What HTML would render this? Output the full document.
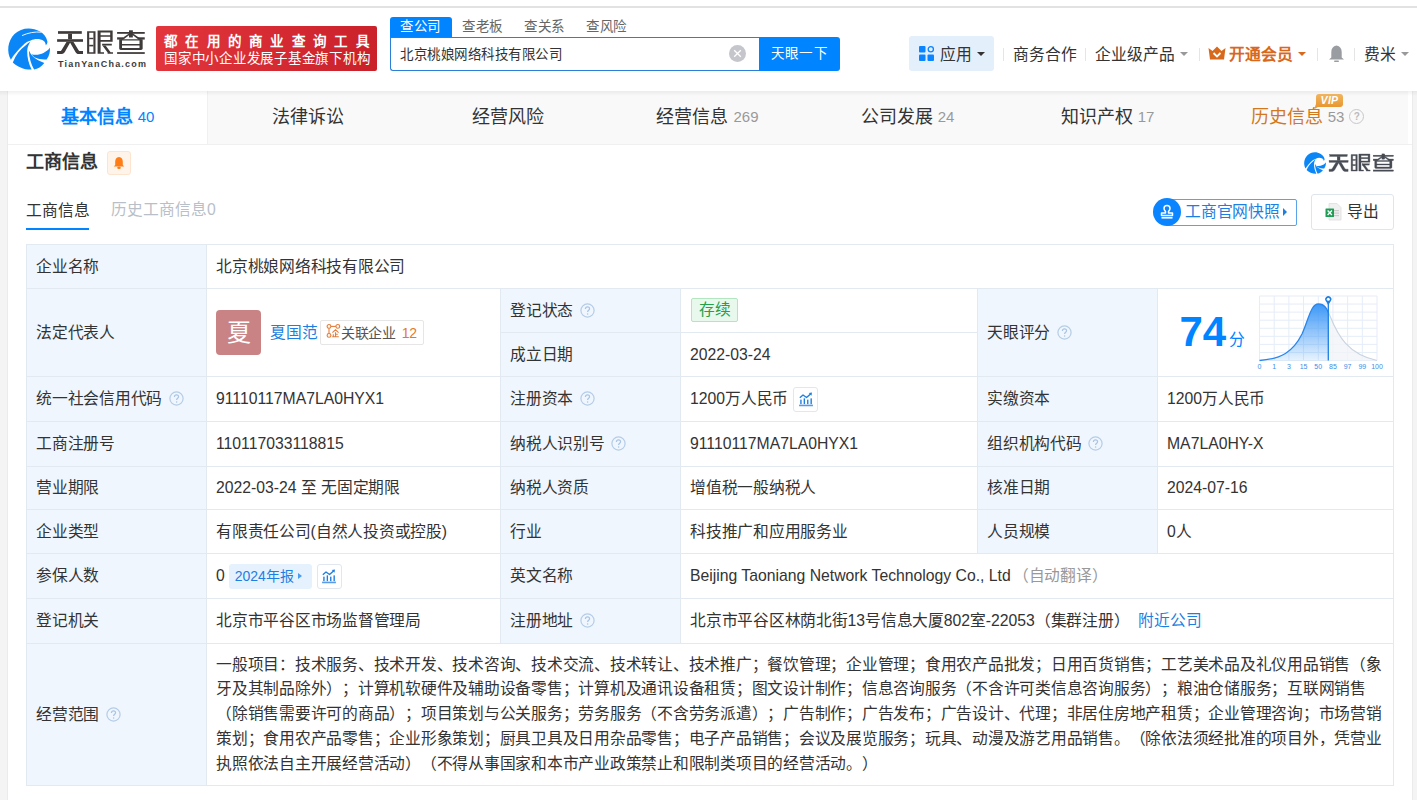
<!DOCTYPE html>
<html lang="zh-CN"><head><meta charset="utf-8">
<style>
*{box-sizing:border-box;margin:0;padding:0}
html,body{width:1417px;height:800px;overflow:hidden}
body{position:relative;text-spacing-trim:space-all;background:#f4f4f4;font-family:"Liberation Sans",sans-serif;color:#333;}
.abs{position:absolute;white-space:nowrap}
#topline{position:absolute;left:0;top:0;width:1417px;height:6px;background:#fff}
#topline2{position:absolute;left:0;top:6px;width:1417px;height:2px;background:#e2e2e2}
#header{position:absolute;left:0;top:8px;width:1417px;height:83px;background:#fff}
#card{position:absolute;left:7px;top:91px;width:1406px;height:709px;background:#fff;border-left:1px solid #ebebeb;border-right:1px solid #ebebeb}
#tabs{position:absolute;left:8px;top:91px;width:1400px;height:54px;background:#f9f9f9;border-bottom:1px solid #f0f0f0}
#tabline{position:absolute;left:1408px;top:144px;width:4px;height:1px;background:#f0f0f0}
#tabsep{position:absolute;left:207px;top:91px;width:1px;height:53px;background:#f0f0f0}
#hshadow{position:absolute;left:0;top:91px;width:1417px;height:5px;background:linear-gradient(rgba(0,0,0,0.055),rgba(0,0,0,0))}
.tab{position:absolute;top:0;height:53px;width:199px;text-align:center;font-size:18px;line-height:52px;color:#333}
.tab .tq{display:inline-block;vertical-align:middle;margin-top:-3px;width:15px;height:15px;border:1px solid #c8c8c8;border-radius:50%;font-size:10px;line-height:13px;text-align:center;color:#bbb;font-weight:bold;margin-left:5px}
.tab .n{font-size:15px;color:#999;margin-left:5px;position:relative;top:-1.5px}
#rstrip{position:absolute;left:1409px;top:91px;width:2px;height:709px;background:#fff}
#rline{position:absolute;left:1411px;top:91px;width:2px;height:709px;background:#ebebeb}
/* table */
.tb{position:absolute;background:#e3e9f0}
.lab{position:absolute;background:#eff6fd;font-size:15.75px;color:#333;padding-left:9px;display:flex;align-items:center;white-space:nowrap}
.val{position:absolute;background:#fff;font-size:15.75px;color:#333;padding-left:9px;display:flex;align-items:center;white-space:nowrap}
.q{display:inline-block;width:15px;height:15px;margin-left:6.5px;position:relative;top:-1.2px}
.tag-green{display:inline-block;width:47px;height:24px;line-height:22px;padding:0 0 0 7px;border:1px solid #b3e5c0;background:#e9f8ed;color:#23a04a;font-size:15.75px;border-radius:2px;margin-left:1px;margin-top:-1px}
.avatar{display:inline-block;width:45px;height:45px;border-radius:4px;background:#c98384;color:#fff;font-size:24px;line-height:45px;text-align:center}
.pname{color:#1c7fe1;margin-left:9px;position:relative;top:-3.5px}
.rel{display:inline-flex;align-items:center;height:25px;border:1px solid #e6e6e6;border-radius:2px;padding:0 6px 0 5px;font-size:14px;letter-spacing:-0.3px;color:#555;margin-left:2px;position:relative;top:-4px}
.rel b{font-weight:normal;color:#e7792b;margin-left:6px;font-size:14px}
.chart-ic{display:inline-flex;align-items:center;justify-content:center;width:25px;height:25px;border:1px solid #e1e7ee;border-radius:3px;margin-left:5px}
.yr{display:inline-flex;align-items:center;width:83px;height:25px;background:#e5f1fd;color:#1c7fe1;padding:0 0 0 6px;border-radius:3px;margin-left:4px;font-size:14px}
.tri{display:inline-block;width:0;height:0;border-left:4.5px solid #4a9cf0;border-top:3.5px solid transparent;border-bottom:3.5px solid transparent;margin-left:5px}
.auto{color:#999;margin-left:2px}
.c{letter-spacing:-0.25px}
.in{white-space:nowrap;line-height:20px}
.q,.chart-ic,.yr,.tag-green,.rel{vertical-align:middle}
.near{color:#1c7fe1;margin-left:9px}
.scope{font-size:15.75px;letter-spacing:-0.25px;line-height:24.75px;white-space:nowrap}
.score{position:absolute;left:21.5px;top:21.5px;font-size:42px;line-height:42px;font-weight:bold;color:#0084ff}
.fen{position:absolute;left:71px;top:41.5px;font-size:15.75px;line-height:18px;color:#0084ff}
</style></head><body>
<div id="topline"></div><div id="topline2"></div>
<div id="header"></div>
<svg class="abs" style="left:0;top:0" width="60" height="80" viewBox="0 0 60 80">
 <g fill="#0a86f7">
  <path d="M10.9,59.8 C6.5,52 7.5,41 14.5,34 C21,28 31,26.5 40.1,31.6 C43.5,33.5 46.5,37 47.4,41.5 C47.6,43 46.8,44.5 45.8,45.2 C45.6,43.5 45,41.8 43.8,41 C40,38.5 34.5,38.5 30.8,40.6 C27.5,41.5 25,43 23.5,44.8 C18,50 13.5,55 10.9,59.8 Z"/>
  <path d="M12.8,62.4 C16,55 20,49.5 25.5,45.6 C27,44 28.8,42.5 30.4,41.8 C28.4,44.5 27.3,47.8 27.2,51 C27,57 28.8,64 31.6,69.6 C24,69.8 17,66.5 12.8,62.4 Z"/>
  <path d="M28.9,50.4 C30.5,54 32.5,56.5 35,58.2 C38,60.3 41.5,61.8 44.3,62.9 C41.5,66.5 37.8,68.8 34.1,69.5 C31,64 29,57 28.9,50.4 Z"/>
  <path d="M31.6,54.2 C35,55.3 40,54.8 43.5,53 C46.8,51.3 49,49.5 49.9,47.6 C50.3,52 49.3,56 46.6,59.4 C42.5,59.7 38.5,59.2 35.6,57.8 C33.8,57 32.5,55.8 31.6,54.2 Z"/>
 </g>
 <path d="M22,35.6 C28,32.8 35,31.5 41.5,32.2" stroke="#fff" stroke-width="0.9" fill="none"/>
</svg>
<svg class="abs" style="left:0;top:0" width="150" height="60" viewBox="0 0 150 60"><g fill="#3e3a39" fill-rule="evenodd">
<rect x="58" y="31.15" width="23.8" height="2.65"/><rect x="68.1" y="33.8" width="3.9" height="5.4"/><rect x="57.1" y="39.2" width="25.9" height="2.6"/>
<path d="M66.6,41.8 L70.6,41.8 L65.8,50.3 C64.8,52.3 63.6,54.1 61.5,54.1 L57.1,54.1 L57.1,51.1 L59.8,51.1 C60.6,51.1 61.1,50.7 61.6,49.9 Z"/>
<path d="M69.6,41.8 L73.4,41.8 L78.6,50.2 C79,50.8 79.5,51.1 80.2,51.1 L83,51.1 L83,54.1 L78.6,54.1 C77.2,54.1 76.3,53.3 75.6,52.2 Z"/>
<path d="M87.1,31.3 H95.5 V53.7 H87.1 Z M89.2,32.7 V52.15 H93.4 V32.7 Z"/><rect x="89.2" y="37.8" width="4.2" height="1.4"/><rect x="89.2" y="44.8" width="4.2" height="1.6"/>
<path d="M97.6,30.45 H112.65 V41.65 H100.6 V52.15 H104 V53.7 H97.6 Z M100.6,32.55 V35.35 H110.2 V32.55 Z M100.6,36.75 V39.9 H110.2 V36.75 Z"/>
<rect x="102.15" y="43.75" width="9.65" height="1.75"/>
<path d="M102.4,45.4 L105.6,45.4 L110.6,52.15 L113,52.15 L113,53.7 L107.6,53.7 L107.6,52.4 Z"/>
<rect x="117.1" y="32" width="27.65" height="1.8"/><rect x="129" y="30.3" width="3.85" height="7.15"/>
<rect x="117.1" y="37.3" width="6" height="2.25"/><rect x="138.1" y="37.3" width="6.65" height="2.25"/>
<path d="M128.6,33.8 L131,33.8 L123.4,39.4 L120.2,39.4 Z"/><path d="M130.9,33.8 L133.3,33.8 L141.7,39.4 L138.4,39.4 Z"/>
<path d="M119.2,39.2 H142.65 V48.6 C142.65,49.5 142,50.05 141,50.05 H120.8 C119.8,50.05 119.2,49.5 119.2,48.6 Z M122,40.6 V43.9 H139.5 V40.6 Z M122,45.5 V48.1 H139.5 V45.5 Z"/>
<rect x="117.1" y="52.15" width="27.65" height="1.75"/>
</g></svg>
<div class="abs" style="left:58px;top:58px;font-size:9px;line-height:12px;font-weight:bold;color:#3e3a39;letter-spacing:1.2px">TianYanCha.com</div>
<div class="abs" style="left:156px;top:26px;width:221px;height:45px;border-radius:2px;background:linear-gradient(100deg,#e3363c,#c9202a)"></div>
<div class="abs" style="left:164px;top:33px;font-size:13.5px;line-height:18px;color:#fff;font-weight:bold;letter-spacing:8.3px">都在用的商业查询工具</div>
<div class="abs" style="left:164px;top:50px;font-size:13.5px;line-height:18px;color:#fff;font-weight:500;letter-spacing:0.75px">国家中小企业发展子基金旗下机构</div>
<!-- search -->
<div class="abs" style="left:390px;top:17px;width:62px;height:21px;background:#0084ff;border-radius:3px 3px 0 0"></div>
<div class="abs" style="left:400px;top:17px;font-size:13.5px;line-height:20px;color:#fff;letter-spacing:0.5px">查公司</div>
<div class="abs" style="left:462px;top:17px;font-size:13.5px;line-height:20px;color:#666;letter-spacing:0.5px">查老板</div>
<div class="abs" style="left:524px;top:17px;font-size:13.5px;line-height:20px;color:#666;letter-spacing:0.5px">查关系</div>
<div class="abs" style="left:586px;top:17px;font-size:13.5px;line-height:20px;color:#666;letter-spacing:0.5px">查风险</div>
<div class="abs" style="left:390px;top:37px;width:371px;height:34px;border:1px solid #2a7fd8;border-right:none;border-radius:0 0 0 3px;background:#fff"></div>
<div class="abs" style="left:400px;top:45px;font-size:13.5px;line-height:20px;color:#333;letter-spacing:0.5px">北京桃娘网络科技有限公司</div>
<div class="abs" style="left:729px;top:45px;width:17px;height:17px;border-radius:50%;background:#c5c6cb"></div>
<svg class="abs" style="left:729px;top:45px" width="17" height="17"><path d="M5.2,5.2 L11.8,11.8 M11.8,5.2 L5.2,11.8" stroke="#fff" stroke-width="1.3"/></svg>
<div class="abs" style="left:759px;top:37px;width:81px;height:34px;background:#0084ff;border-radius:0 3px 3px 0"></div>
<div class="abs" style="left:771px;top:44px;font-size:13.5px;line-height:20px;color:#fff;letter-spacing:1.2px">天眼一下</div>
<!-- nav -->
<div class="abs" style="left:909px;top:36px;width:85px;height:35px;border-radius:3px;background:#e4effc"></div>
<svg class="abs" style="left:919px;top:46px" width="16" height="16" viewBox="0 0 16 16"><rect x="0" y="0" width="6.5" height="6.5" rx="1" fill="#0a84ff"/><circle cx="11.8" cy="3.25" r="2.6" fill="none" stroke="#0a84ff" stroke-width="1.3"/><rect x="0" y="8.5" width="6.5" height="6.5" rx="1" fill="#0a84ff"/><rect x="8.5" y="8.5" width="6.5" height="6.5" rx="1" fill="#0a84ff"/></svg>
<div class="abs" style="left:940px;top:44.5px;font-size:15.75px;line-height:20px;color:#333">应用</div>
<div class="abs" style="left:977px;top:52px;width:0;height:0;border-left:4px solid transparent;border-right:4px solid transparent;border-top:4px solid #333"></div>
<div class="abs" style="left:1003px;top:48px;width:1px;height:13px;background:#e5e5e5"></div>
<div class="abs" style="left:1013px;top:44.5px;font-size:15.75px;line-height:20px;color:#333">商务合作</div>
<div class="abs" style="left:1085px;top:48px;width:1px;height:13px;background:#e5e5e5"></div>
<div class="abs" style="left:1095px;top:44.5px;font-size:15.75px;line-height:20px;color:#333">企业级产品</div>
<div class="abs" style="left:1180px;top:52px;width:0;height:0;border-left:4px solid transparent;border-right:4px solid transparent;border-top:4px solid #999"></div>
<div class="abs" style="left:1199px;top:48px;width:1px;height:13px;background:#e5e5e5"></div>
<svg class="abs" style="left:1208px;top:46px" width="18" height="15" viewBox="0 0 18 15"><path d="M0.5,2 L4.5,5 L9,0.5 L13.5,5 L17.5,2 L16,13.5 L2,13.5 Z" fill="#d8691c"/><path d="M5.5,7 L9,10.5 L12.5,7" stroke="#fff" stroke-width="1.8" fill="none"/></svg>
<div class="abs" style="left:1229px;top:44.5px;font-size:15.75px;line-height:20px;color:#d8691c;font-weight:bold">开通会员</div>
<div class="abs" style="left:1298px;top:52px;width:0;height:0;border-left:4px solid transparent;border-right:4px solid transparent;border-top:4px solid #d8691c"></div>
<div class="abs" style="left:1317px;top:48px;width:1px;height:13px;background:#e5e5e5"></div>
<svg class="abs" style="left:1328px;top:45px" width="17" height="18" viewBox="0 0 17 18"><path d="M8.5,0.5 C5,1 3.3,3.5 3.3,7 L3.3,12.5 L1,14.5 L16,14.5 L13.7,12.5 L13.7,7 C13.7,3.5 12,1 8.5,0.5 Z" fill="#999ca1"/><rect x="6" y="15.5" width="5" height="1.6" rx="0.8" fill="#999ca1"/></svg>
<div class="abs" style="left:1354px;top:48px;width:1px;height:13px;background:#e5e5e5"></div>
<div class="abs" style="left:1364px;top:44.5px;font-size:15.75px;line-height:20px;color:#333">费米</div>
<div class="abs" style="left:1401px;top:52px;width:0;height:0;border-left:4px solid transparent;border-right:4px solid transparent;border-top:4px solid #999"></div>

<div id="card"></div>
<div id="tabs">
  <div class="tab" style="left:0;background:#fff;color:#0084ff;font-weight:bold">基本信息<span class="n" style="color:#0084ff;font-weight:normal">40</span></div>
  <div class="tab" style="left:200px">法律诉讼</div>
  <div class="tab" style="left:400px">经营风险</div>
  <div class="tab" style="left:600px">经营信息<span class="n">269</span></div>
  <div class="tab" style="left:800px">公司发展<span class="n">24</span></div>
  <div class="tab" style="left:1000px">知识产权<span class="n">17</span></div>
  <div class="tab" style="left:1200px;color:#d2781e">历史信息<span class="n">53</span><span class="tq">?</span></div>
</div>

<div class="abs" style="left:1316px;top:94px;width:27px;height:13px;border-radius:3px 3px 3px 0;background:linear-gradient(180deg,#f3b660,#e8962f)"></div>
<svg class="abs" style="left:1312px;top:104px" width="8" height="7" viewBox="0 0 8 7"><path d="M4,0 L7.5,2 L2.2,5.2 Z" fill="#ec9a35"/></svg>
<div class="abs" style="left:1316px;top:94px;width:27px;height:13px;font-size:10.5px;line-height:13px;color:#fff;font-weight:bold;font-style:italic;text-align:center;letter-spacing:0.3px">VIP</div>
<!-- section title -->
<div class="abs" style="left:26px;top:150px;font-size:18px;line-height:24px;font-weight:bold;color:#333">工商信息</div>
<div class="abs" style="left:107px;top:151px;width:24px;height:24px;border:1px solid #fde4cf;background:#fff4ea;border-radius:3px"></div>
<svg class="abs" style="left:111px;top:155px" width="16" height="16" viewBox="0 0 16 16"><path d="M8,2 C5.3,2.2 4.2,4.2 4.2,6.8 L4.2,10 L2.8,11.5 L13.2,11.5 L11.8,10 L11.8,6.8 C11.8,4.2 10.7,2.2 8,2 Z" fill="#ff7d16"/><ellipse cx="8" cy="12.8" rx="1.8" ry="1.2" fill="#ff7d16"/></svg>
<!-- small logo right -->
<svg class="abs" style="left:1302px;top:150px" width="26" height="26" viewBox="4 24 50 50">
 <g fill="#0a86f7">
  <path d="M10.9,59.8 C6.5,52 7.5,41 14.5,34 C21,28 31,26.5 40.1,31.6 C43.5,33.5 46.5,37 47.4,41.5 C47.6,43 46.8,44.5 45.8,45.2 C45.6,43.5 45,41.8 43.8,41 C40,38.5 34.5,38.5 30.8,40.6 C27.5,41.5 25,43 23.5,44.8 C18,50 13.5,55 10.9,59.8 Z"/>
  <path d="M12.8,62.4 C16,55 20,49.5 25.5,45.6 C27,44 28.8,42.5 30.4,41.8 C28.4,44.5 27.3,47.8 27.2,51 C27,57 28.8,64 31.6,69.6 C24,69.8 17,66.5 12.8,62.4 Z"/>
  <path d="M28.9,50.4 C30.5,54 32.5,56.5 35,58.2 C38,60.3 41.5,61.8 44.3,62.9 C41.5,66.5 37.8,68.8 34.1,69.5 C31,64 29,57 28.9,50.4 Z"/>
  <path d="M31.6,54.2 C35,55.3 40,54.8 43.5,53 C46.8,51.3 49,49.5 49.9,47.6 C50.3,52 49.3,56 46.6,59.4 C42.5,59.7 38.5,59.2 35.6,57.8 C33.8,57 32.5,55.8 31.6,54.2 Z"/>
 </g>
</svg>
<svg class="abs" style="left:1320px;top:145px" width="80" height="32" viewBox="1320 145 80 32"><g fill="#474b53" stroke="#474b53" stroke-width="0.45" fill-rule="evenodd" transform="translate(1287.105,131.619) scale(0.735)">
<rect x="58" y="31.15" width="23.8" height="2.65"/><rect x="68.1" y="33.8" width="3.9" height="5.4"/><rect x="57.1" y="39.2" width="25.9" height="2.6"/>
<path d="M66.6,41.8 L70.6,41.8 L65.8,50.3 C64.8,52.3 63.6,54.1 61.5,54.1 L57.1,54.1 L57.1,51.1 L59.8,51.1 C60.6,51.1 61.1,50.7 61.6,49.9 Z"/>
<path d="M69.6,41.8 L73.4,41.8 L78.6,50.2 C79,50.8 79.5,51.1 80.2,51.1 L83,51.1 L83,54.1 L78.6,54.1 C77.2,54.1 76.3,53.3 75.6,52.2 Z"/>
<path d="M87.1,31.3 H95.5 V53.7 H87.1 Z M89.2,32.7 V52.15 H93.4 V32.7 Z"/><rect x="89.2" y="37.8" width="4.2" height="1.4"/><rect x="89.2" y="44.8" width="4.2" height="1.6"/>
<path d="M97.6,30.45 H112.65 V41.65 H100.6 V52.15 H104 V53.7 H97.6 Z M100.6,32.55 V35.35 H110.2 V32.55 Z M100.6,36.75 V39.9 H110.2 V36.75 Z"/>
<rect x="102.15" y="43.75" width="9.65" height="1.75"/>
<path d="M102.4,45.4 L105.6,45.4 L110.6,52.15 L113,52.15 L113,53.7 L107.6,53.7 L107.6,52.4 Z"/>
<rect x="117.1" y="32" width="27.65" height="1.8"/><rect x="129" y="30.3" width="3.85" height="7.15"/>
<rect x="117.1" y="37.3" width="6" height="2.25"/><rect x="138.1" y="37.3" width="6.65" height="2.25"/>
<path d="M128.6,33.8 L131,33.8 L123.4,39.4 L120.2,39.4 Z"/><path d="M130.9,33.8 L133.3,33.8 L141.7,39.4 L138.4,39.4 Z"/>
<path d="M119.2,39.2 H142.65 V48.6 C142.65,49.5 142,50.05 141,50.05 H120.8 C119.8,50.05 119.2,49.5 119.2,48.6 Z M122,40.6 V43.9 H139.5 V40.6 Z M122,45.5 V48.1 H139.5 V45.5 Z"/>
<rect x="117.1" y="52.15" width="27.65" height="1.75"/>
</g></svg>
<!-- sub tabs -->
<div class="abs" style="left:26px;top:200px;font-size:15.75px;line-height:22px;color:#333">工商信息</div>
<div class="abs" style="left:111px;top:199px;font-size:15.75px;line-height:22px;color:#b9bfc8">历史工商信息0</div>
<div class="abs" style="left:26px;top:228px;width:63px;height:2px;background:#0084ff"></div>
<!-- buttons -->
<div class="abs" style="left:1166px;top:199px;width:131px;height:27px;border:1px solid #5aa3ea;border-radius:2px;background:#fff"></div>
<div class="abs" style="left:1153px;top:198px;width:28px;height:28px;border-radius:50%;background:#0a84ff"></div>
<svg class="abs" style="left:1157px;top:202px" width="20" height="20" viewBox="0 0 20 20"><path d="M10,3.5 C8,3.5 7,5 7,6.5 C7,8 8,8.8 8.5,9.5 L8.5,11 L4.5,11 L4.5,13.5 L15.5,13.5 L15.5,11 L11.5,11 L11.5,9.5 C12,8.8 13,8 13,6.5 C13,5 12,3.5 10,3.5 Z" fill="none" stroke="#fff" stroke-width="1.5" stroke-linejoin="round"/><rect x="4.5" y="15" width="11" height="1.6" fill="#fff"/></svg>
<div class="abs" style="left:1185px;top:201px;font-size:15.75px;line-height:22px;color:#1c7fe1;letter-spacing:-0.25px">工商官网快照</div>
<div class="abs" style="left:1283px;top:208px;width:0;height:0;border-left:4px solid #1c7fe1;border-top:4px solid transparent;border-bottom:4px solid transparent"></div>
<div class="abs" style="left:1311px;top:194px;width:83px;height:36px;border:1px solid #dfe5ec;border-radius:3px;background:#fff"></div>
<svg class="abs" style="left:1325px;top:203px" width="17" height="18" viewBox="0 0 17 18"><path d="M4,0.5 L12,0.5 L16,4.5 L16,17 L4,17 Z" fill="#f0f0f0" stroke="#ddd" stroke-width="0.8"/><rect x="9" y="7" width="5" height="1.2" fill="#ccc"/><rect x="9" y="9.5" width="5" height="1.2" fill="#ccc"/><rect x="9" y="12" width="5" height="1.2" fill="#ccc"/><rect x="0.5" y="5.5" width="8.5" height="8.5" rx="0.5" fill="#1f9d55"/><path d="M2.6,7.5 L6.9,12 M6.9,7.5 L2.6,12" stroke="#fff" stroke-width="1.3"/></svg>
<div class="abs" style="left:1347px;top:201px;font-size:15.75px;line-height:22px;color:#333">导出</div>
<div id="tabline"></div><div id="tabsep"></div><div id="hshadow"></div>

<div class="tb" style="left:26px;top:244px;width:1368px;height:542px"></div>
<div class="lab" style="left:27px;top:245px;width:179px;height:43px;"><div class="in"><span class="c">企业名称</span></div></div>
<div class="val" style="left:207px;top:245px;width:1186px;height:43px;"><div class="in"><span class="c">北京桃娘网络科技有限公司</span></div></div>
<div class="lab" style="left:27px;top:289px;width:179px;height:87px;"><div class="in"><span class="c">法定代表人</span></div></div>
<div class="val" style="left:207px;top:289px;width:293px;height:87px;"><div class="in"><span class="avatar">夏</span><span class="pname">夏国范</span><span class="rel"><span class="relic"><svg width="15" height="15" viewBox="0 0 15 15"><g stroke="#e47d3a" stroke-width="1.1" fill="#fff5ec"><line x1="3" y1="3.4" x2="11.8" y2="3.4"/><line x1="3" y1="3.4" x2="3" y2="12.4"/><circle cx="3" cy="3.4" r="1.9"/><circle cx="11.8" cy="3.4" r="1.9"/><circle cx="3" cy="12.4" r="1.9"/></g><path d="M6.4,9.6 L9.5,6.8 L12.6,9.6 M9.5,9.2 L9.5,13.8 M7.3,11.2 L7.3,13.8 M9.5,11.3 L11.8,11.3 M6.2,13.8 L12.8,13.8" stroke="#e47d3a" stroke-width="1.1" fill="none"/></svg></span>关联企业<b>12</b></span></div></div>
<div class="lab" style="left:501px;top:289px;width:179px;height:43px;"><div class="in"><span class="c">登记状态</span><svg class="q" width="15" height="15" viewBox="0 0 15 15"><circle cx="7.5" cy="7.5" r="6.6" fill="none" stroke="#b5cce7" stroke-width="1.2"/><path d="M5.4,5.9 C5.4,4.6 6.3,3.9 7.5,3.9 C8.7,3.9 9.6,4.6 9.6,5.8 C9.6,7.2 7.6,7.3 7.6,8.9" fill="none" stroke="#a9c4e4" stroke-width="1.2"/><circle cx="7.6" cy="10.9" r="0.75" fill="#a9c4e4"/></svg></div></div>
<div class="lab" style="left:501px;top:333px;width:179px;height:43px;"><div class="in"><span class="c">成立日期</span></div></div>
<div class="val" style="left:681px;top:289px;width:296px;height:43px;"><div class="in"><span class="tag-green"><span class="c">存续</span></span></div></div>
<div class="val" style="left:681px;top:333px;width:296px;height:43px;"><div class="in">2022-03-24</div></div>
<div class="lab" style="left:978px;top:289px;width:179px;height:87px;"><div class="in"><span class="c">天眼评分</span><svg class="q" width="15" height="15" viewBox="0 0 15 15"><circle cx="7.5" cy="7.5" r="6.6" fill="none" stroke="#b5cce7" stroke-width="1.2"/><path d="M5.4,5.9 C5.4,4.6 6.3,3.9 7.5,3.9 C8.7,3.9 9.6,4.6 9.6,5.8 C9.6,7.2 7.6,7.3 7.6,8.9" fill="none" stroke="#a9c4e4" stroke-width="1.2"/><circle cx="7.6" cy="10.9" r="0.75" fill="#a9c4e4"/></svg></div></div>
<div class="val" style="left:1158px;top:289px;width:235px;height:87px;"><div class="in"><span class="score">74</span><span class="fen">分</span><svg class="chartsvg" width="140" height="85" viewBox="1250 290 140 85" style="position:absolute;left:92px;top:1px"><defs><linearGradient id="gfill" x1="0" y1="0" x2="0" y2="1"><stop offset="0" stop-color="#3d98f7"/><stop offset="1" stop-color="#3d98f7" stop-opacity="0.12"/></linearGradient><clipPath id="cl"><rect x="1250" y="290" width="78.3" height="80"/></clipPath><clipPath id="cr"><rect x="1328.3" y="290" width="60" height="80"/></clipPath></defs><path d="M1259.50,296.0 L1259.50,360.5 M1259.5,296.00 L1377.0,296.00 M1274.19,296.0 L1274.19,360.5 M1259.5,304.06 L1377.0,304.06 M1288.88,296.0 L1288.88,360.5 M1259.5,312.12 L1377.0,312.12 M1303.56,296.0 L1303.56,360.5 M1259.5,320.19 L1377.0,320.19 M1318.25,296.0 L1318.25,360.5 M1259.5,328.25 L1377.0,328.25 M1332.94,296.0 L1332.94,360.5 M1259.5,336.31 L1377.0,336.31 M1347.62,296.0 L1347.62,360.5 M1259.5,344.38 L1377.0,344.38 M1362.31,296.0 L1362.31,360.5 M1259.5,352.44 L1377.0,352.44 M1377.00,296.0 L1377.00,360.5 M1259.5,360.50 L1377.0,360.50" stroke="#e5edf8" stroke-width="1" fill="none"/><path d="M1259.5,360.5 C1281,359 1293,352 1302,334 C1309,318 1311,304 1318.5,304 C1325,304 1327,309 1330,316 C1338,336 1348,354 1377,360.5 Z" fill="url(#gfill)" clip-path="url(#cl)"/><path d="M1259.5,360.5 C1281,359 1293,352 1302,334 C1309,318 1311,304 1318.5,304 C1325,304 1327,309 1330,316 C1338,336 1348,354 1377,360.5 Z" fill="#f1f4f8" fill-opacity="0.8" clip-path="url(#cr)"/><path d="M1259.5,360.5 C1281,359 1293,352 1302,334 C1309,318 1311,304 1318.5,304 C1325,304 1327,309 1330,316 C1338,336 1348,354 1377,360.5" stroke="#2a86ec" stroke-width="1.3" fill="none" clip-path="url(#cl)"/><path d="M1259.5,360.5 C1281,359 1293,352 1302,334 C1309,318 1311,304 1318.5,304 C1325,304 1327,309 1330,316 C1338,336 1348,354 1377,360.5" stroke="#c9d3df" stroke-width="1.1" fill="none" clip-path="url(#cr)"/><line x1="1328.3" y1="302" x2="1328.3" y2="360.5" stroke="#1c7fe1" stroke-width="1.3"/><path d="M1328.3,305 L1325.9,301.3 A3.1,3.1 0 1 1 1330.7,301.3 Z" fill="#1c7fe1"/><circle cx="1328.3" cy="299.3" r="1.5" fill="#fff"/><text x="1259.50" y="369" font-size="7" font-family="Liberation Sans" fill="#3d8ee8" text-anchor="middle">0</text><text x="1274.19" y="369" font-size="7" font-family="Liberation Sans" fill="#3d8ee8" text-anchor="middle">1</text><text x="1288.88" y="369" font-size="7" font-family="Liberation Sans" fill="#3d8ee8" text-anchor="middle">3</text><text x="1303.56" y="369" font-size="7" font-family="Liberation Sans" fill="#3d8ee8" text-anchor="middle">15</text><text x="1318.25" y="369" font-size="7" font-family="Liberation Sans" fill="#3d8ee8" text-anchor="middle">50</text><text x="1332.94" y="369" font-size="7" font-family="Liberation Sans" fill="#3d8ee8" text-anchor="middle">85</text><text x="1347.62" y="369" font-size="7" font-family="Liberation Sans" fill="#3d8ee8" text-anchor="middle">97</text><text x="1362.31" y="369" font-size="7" font-family="Liberation Sans" fill="#3d8ee8" text-anchor="middle">99</text><text x="1377.00" y="369" font-size="7" font-family="Liberation Sans" fill="#3d8ee8" text-anchor="middle">100</text></svg></div></div>
<div class="lab" style="left:27px;top:377px;width:179px;height:44px;"><div class="in"><span class="c">统一社会信用代码</span><svg class="q" width="15" height="15" viewBox="0 0 15 15"><circle cx="7.5" cy="7.5" r="6.6" fill="none" stroke="#b5cce7" stroke-width="1.2"/><path d="M5.4,5.9 C5.4,4.6 6.3,3.9 7.5,3.9 C8.7,3.9 9.6,4.6 9.6,5.8 C9.6,7.2 7.6,7.3 7.6,8.9" fill="none" stroke="#a9c4e4" stroke-width="1.2"/><circle cx="7.6" cy="10.9" r="0.75" fill="#a9c4e4"/></svg></div></div>
<div class="val" style="left:207px;top:377px;width:293px;height:44px;"><div class="in">91110117MA7LA0HYX1</div></div>
<div class="lab" style="left:501px;top:377px;width:179px;height:44px;"><div class="in"><span class="c">注册资本</span><svg class="q" width="15" height="15" viewBox="0 0 15 15"><circle cx="7.5" cy="7.5" r="6.6" fill="none" stroke="#b5cce7" stroke-width="1.2"/><path d="M5.4,5.9 C5.4,4.6 6.3,3.9 7.5,3.9 C8.7,3.9 9.6,4.6 9.6,5.8 C9.6,7.2 7.6,7.3 7.6,8.9" fill="none" stroke="#a9c4e4" stroke-width="1.2"/><circle cx="7.6" cy="10.9" r="0.75" fill="#a9c4e4"/></svg></div></div>
<div class="val" style="left:681px;top:377px;width:296px;height:44px;"><div class="in">1200<span class="c">万人民币</span><span class="chart-ic"><svg width="16" height="16" viewBox="0.5 0.5 15 15"><path d="M2.2,6.8 L5.2,4.3 L8.5,6.6 L12.3,3.3" stroke="#1c7fe1" stroke-width="1.3" fill="none" stroke-linejoin="round"/><path d="M10.6,2.4 L13.6,2 L13.2,5 Z" fill="#1c7fe1"/><rect x="2.6" y="8.6" width="1.3" height="4.2" fill="#1c7fe1"/><rect x="5.8" y="7.4" width="1.3" height="5.4" fill="#1c7fe1"/><rect x="9" y="8.6" width="1.3" height="4.2" fill="#1c7fe1"/><rect x="12.2" y="7.4" width="1.3" height="5.4" fill="#1c7fe1"/><rect x="1.5" y="13.3" width="13" height="1.5" fill="#5b9be6"/></svg></span></div></div>
<div class="lab" style="left:978px;top:377px;width:179px;height:44px;"><div class="in"><span class="c">实缴资本</span></div></div>
<div class="val" style="left:1158px;top:377px;width:235px;height:44px;"><div class="in">1200<span class="c">万人民币</span></div></div>
<div class="lab" style="left:27px;top:422px;width:179px;height:44px;"><div class="in"><span class="c">工商注册号</span></div></div>
<div class="val" style="left:207px;top:422px;width:293px;height:44px;"><div class="in">110117033118815</div></div>
<div class="lab" style="left:501px;top:422px;width:179px;height:44px;"><div class="in"><span class="c">纳税人识别号</span><svg class="q" width="15" height="15" viewBox="0 0 15 15"><circle cx="7.5" cy="7.5" r="6.6" fill="none" stroke="#b5cce7" stroke-width="1.2"/><path d="M5.4,5.9 C5.4,4.6 6.3,3.9 7.5,3.9 C8.7,3.9 9.6,4.6 9.6,5.8 C9.6,7.2 7.6,7.3 7.6,8.9" fill="none" stroke="#a9c4e4" stroke-width="1.2"/><circle cx="7.6" cy="10.9" r="0.75" fill="#a9c4e4"/></svg></div></div>
<div class="val" style="left:681px;top:422px;width:296px;height:44px;"><div class="in">91110117MA7LA0HYX1</div></div>
<div class="lab" style="left:978px;top:422px;width:179px;height:44px;"><div class="in"><span class="c">组织机构代码</span><svg class="q" width="15" height="15" viewBox="0 0 15 15"><circle cx="7.5" cy="7.5" r="6.6" fill="none" stroke="#b5cce7" stroke-width="1.2"/><path d="M5.4,5.9 C5.4,4.6 6.3,3.9 7.5,3.9 C8.7,3.9 9.6,4.6 9.6,5.8 C9.6,7.2 7.6,7.3 7.6,8.9" fill="none" stroke="#a9c4e4" stroke-width="1.2"/><circle cx="7.6" cy="10.9" r="0.75" fill="#a9c4e4"/></svg></div></div>
<div class="val" style="left:1158px;top:422px;width:235px;height:44px;"><div class="in">MA7LA0HY-X</div></div>
<div class="lab" style="left:27px;top:467px;width:179px;height:42px;"><div class="in"><span class="c">营业期限</span></div></div>
<div class="val" style="left:207px;top:467px;width:293px;height:42px;"><div class="in">2022-03-24 <span class="c">至</span> <span class="c">无固定期限</span></div></div>
<div class="lab" style="left:501px;top:467px;width:179px;height:42px;"><div class="in"><span class="c">纳税人资质</span></div></div>
<div class="val" style="left:681px;top:467px;width:296px;height:42px;"><div class="in"><span class="c">增值税一般纳税人</span></div></div>
<div class="lab" style="left:978px;top:467px;width:179px;height:42px;"><div class="in"><span class="c">核准日期</span></div></div>
<div class="val" style="left:1158px;top:467px;width:235px;height:42px;"><div class="in">2024-07-16</div></div>
<div class="lab" style="left:27px;top:510px;width:179px;height:43px;"><div class="in"><span class="c">企业类型</span></div></div>
<div class="val" style="left:207px;top:510px;width:293px;height:43px;"><div class="in"><span class="c">有限责任公司</span>(<span class="c">自然人投资或控股</span>)</div></div>
<div class="lab" style="left:501px;top:510px;width:179px;height:43px;"><div class="in"><span class="c">行业</span></div></div>
<div class="val" style="left:681px;top:510px;width:296px;height:43px;"><div class="in"><span class="c">科技推广和应用服务业</span></div></div>
<div class="lab" style="left:978px;top:510px;width:179px;height:43px;"><div class="in"><span class="c">人员规模</span></div></div>
<div class="val" style="left:1158px;top:510px;width:235px;height:43px;"><div class="in">0<span class="c">人</span></div></div>
<div class="lab" style="left:27px;top:554px;width:179px;height:44px;"><div class="in"><span class="c">参保人数</span></div></div>
<div class="val" style="left:207px;top:554px;width:293px;height:44px;"><div class="in">0<span class="yr">2024<span class="c">年报</span><span class="tri"></span></span><span class="chart-ic"><svg width="16" height="16" viewBox="0.5 0.5 15 15"><path d="M2.2,6.8 L5.2,4.3 L8.5,6.6 L12.3,3.3" stroke="#1c7fe1" stroke-width="1.3" fill="none" stroke-linejoin="round"/><path d="M10.6,2.4 L13.6,2 L13.2,5 Z" fill="#1c7fe1"/><rect x="2.6" y="8.6" width="1.3" height="4.2" fill="#1c7fe1"/><rect x="5.8" y="7.4" width="1.3" height="5.4" fill="#1c7fe1"/><rect x="9" y="8.6" width="1.3" height="4.2" fill="#1c7fe1"/><rect x="12.2" y="7.4" width="1.3" height="5.4" fill="#1c7fe1"/><rect x="1.5" y="13.3" width="13" height="1.5" fill="#5b9be6"/></svg></span></div></div>
<div class="lab" style="left:501px;top:554px;width:179px;height:44px;"><div class="in"><span class="c">英文名称</span></div></div>
<div class="val" style="left:681px;top:554px;width:712px;height:44px;"><div class="in">Beijing Taoniang Network Technology Co., Ltd<span class="auto"><span class="c">（自动翻译）</span></span></div></div>
<div class="lab" style="left:27px;top:599px;width:179px;height:44px;"><div class="in"><span class="c">登记机关</span></div></div>
<div class="val" style="left:207px;top:599px;width:293px;height:44px;"><div class="in"><span class="c">北京市平谷区市场监督管理局</span></div></div>
<div class="lab" style="left:501px;top:599px;width:179px;height:44px;"><div class="in"><span class="c">注册地址</span><svg class="q" width="15" height="15" viewBox="0 0 15 15"><circle cx="7.5" cy="7.5" r="6.6" fill="none" stroke="#b5cce7" stroke-width="1.2"/><path d="M5.4,5.9 C5.4,4.6 6.3,3.9 7.5,3.9 C8.7,3.9 9.6,4.6 9.6,5.8 C9.6,7.2 7.6,7.3 7.6,8.9" fill="none" stroke="#a9c4e4" stroke-width="1.2"/><circle cx="7.6" cy="10.9" r="0.75" fill="#a9c4e4"/></svg></div></div>
<div class="val" style="left:681px;top:599px;width:712px;height:44px;"><div class="in"><span class="c">北京市平谷区林荫北街</span>13<span class="c">号信息大厦</span>802<span class="c">室</span>-22053<span class="c">（集群注册）</span><span class="near"><span class="c">附近公司</span></span></div></div>
<div class="lab" style="left:27px;top:644px;width:179px;height:141px;"><div class="in"><span class="c">经营范围</span><svg class="q" width="15" height="15" viewBox="0 0 15 15"><circle cx="7.5" cy="7.5" r="6.6" fill="none" stroke="#b5cce7" stroke-width="1.2"/><path d="M5.4,5.9 C5.4,4.6 6.3,3.9 7.5,3.9 C8.7,3.9 9.6,4.6 9.6,5.8 C9.6,7.2 7.6,7.3 7.6,8.9" fill="none" stroke="#a9c4e4" stroke-width="1.2"/><circle cx="7.6" cy="10.9" r="0.75" fill="#a9c4e4"/></svg></div></div>
<div class="val" style="left:207px;top:644px;width:1186px;height:141px;"><div class="scope"><div>一般项目：技术服务、技术开发、技术咨询、技术交流、技术转让、技术推广；餐饮管理；企业管理；食用农产品批发；日用百货销售；工艺美术品及礼仪用品销售（象</div><div>牙及其制品除外）；计算机软硬件及辅助设备零售；计算机及通讯设备租赁；图文设计制作；信息咨询服务（不含许可类信息咨询服务）；粮油仓储服务；互联网销售</div><div>（除销售需要许可的商品）；项目策划与公关服务；劳务服务（不含劳务派遣）；广告制作；广告发布；广告设计、代理；非居住房地产租赁；企业管理咨询；市场营销</div><div>策划；食用农产品零售；企业形象策划；厨具卫具及日用杂品零售；电子产品销售；会议及展览服务；玩具、动漫及游艺用品销售。（除依法须经批准的项目外，凭营业</div><div>执照依法自主开展经营活动）（不得从事国家和本市产业政策禁止和限制类项目的经营活动。）</div></div></div>

</body></html>
